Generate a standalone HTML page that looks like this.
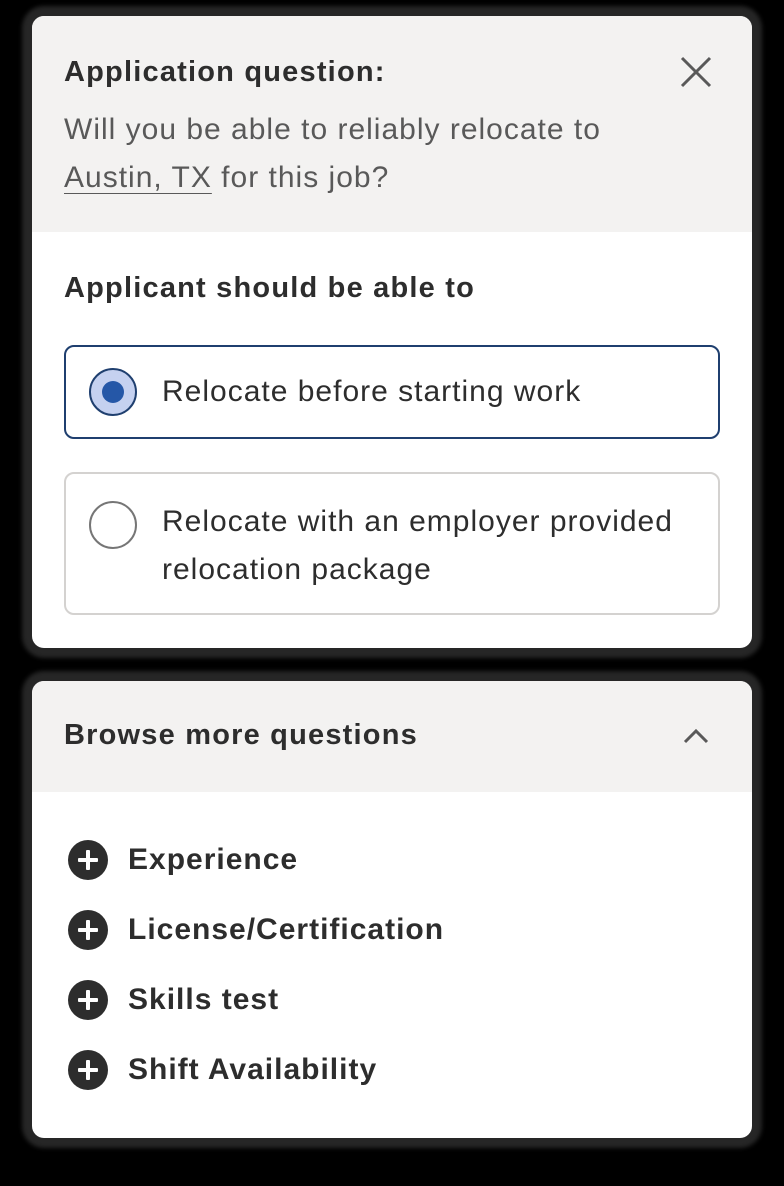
<!DOCTYPE html>
<html><head><style>
*{margin:0;padding:0;box-sizing:border-box}
body{width:784px;height:1186px;background:#000;font-family:"Liberation Sans",sans-serif;position:relative;overflow:hidden;color:#2d2d2d}
.card{position:absolute;left:32px;width:720px;background:#fff;border-radius:12px;overflow:hidden;box-shadow:0 0 4px 10px #262626}
.hd{background:#f3f2f1;padding:0 32px}
.t{font-weight:bold;font-size:29px;letter-spacing:1.2px;color:#2d2d2d}
.opt{position:absolute;left:32px;width:656px;border-radius:10px}
.rad{position:absolute;left:23px;width:48px;height:48px;border-radius:50%}
.ot{position:absolute;left:96px;font-size:30px;letter-spacing:1px;color:#2d2d2d;line-height:48px;white-space:nowrap}
.item{position:absolute;left:36px;display:flex;align-items:center;font-size:30px;letter-spacing:1px;font-weight:bold}
.pl{width:40px;height:40px;border-radius:50%;background:#2d2d2d;margin-right:20px;position:relative}
.pl:before,.pl:after{content:"";position:absolute;background:#fff;left:10px;top:18px;width:20px;height:4px;border-radius:1px}
.pl:after{transform:rotate(90deg)}
</style></head><body>
<div class="card" style="top:16px;height:632px">
  <div class="hd" style="height:216px;position:relative">
    <div class="t" style="position:absolute;top:40px;left:32px">Application question:</div>
    <div style="position:absolute;top:90px;left:32px;font-size:30px;letter-spacing:1px;line-height:48px;color:#595959;white-space:nowrap">Will you be able to reliably relocate to<br><span style="text-decoration:underline;text-underline-offset:6px;text-decoration-thickness:1px">Austin, TX</span> for this job?</div>
    <svg style="position:absolute;left:648px;top:40px" width="32" height="32" viewBox="0 0 32 32"><path d="M2 2L30 30M30 2L2 30" stroke="#595959" stroke-width="3"/></svg>
  </div>
  <div class="t" style="position:absolute;top:256px;left:32px">Applicant should be able to</div>
  <div class="opt" style="top:329px;height:94px;border:2px solid #1f3f6f">
    <div class="rad" style="top:21px;background:#c5d1f0;border:2px solid #1f3f6f"><div style="position:absolute;left:11px;top:11px;width:22px;height:22px;border-radius:50%;background:#2557a7"></div></div>
    <div class="ot" style="top:21px">Relocate before starting work</div>
  </div>
  <div class="opt" style="top:456px;height:143px;border:2px solid #d4d2d0">
    <div class="rad" style="top:27px;border:2px solid #767676"></div>
    <div class="ot" style="top:24px">Relocate with an employer provided<br>relocation package</div>
  </div>
</div>
<div class="card" style="top:681px;height:457px">
  <div class="hd" style="height:111px;position:relative">
    <div class="t" style="position:absolute;top:38px;left:32px">Browse more questions</div>
    <svg style="position:absolute;left:651px;top:47px" width="26" height="16" viewBox="0 0 26 16"><path d="M2 14L13 3L24 14" fill="none" stroke="#595959" stroke-width="3"/></svg>
  </div>
  <div class="item" style="top:159px"><div class="pl"></div>Experience</div>
  <div class="item" style="top:229px"><div class="pl"></div>License/Certification</div>
  <div class="item" style="top:299px"><div class="pl"></div>Skills test</div>
  <div class="item" style="top:369px"><div class="pl"></div>Shift Availability</div>
</div>
</body></html>
